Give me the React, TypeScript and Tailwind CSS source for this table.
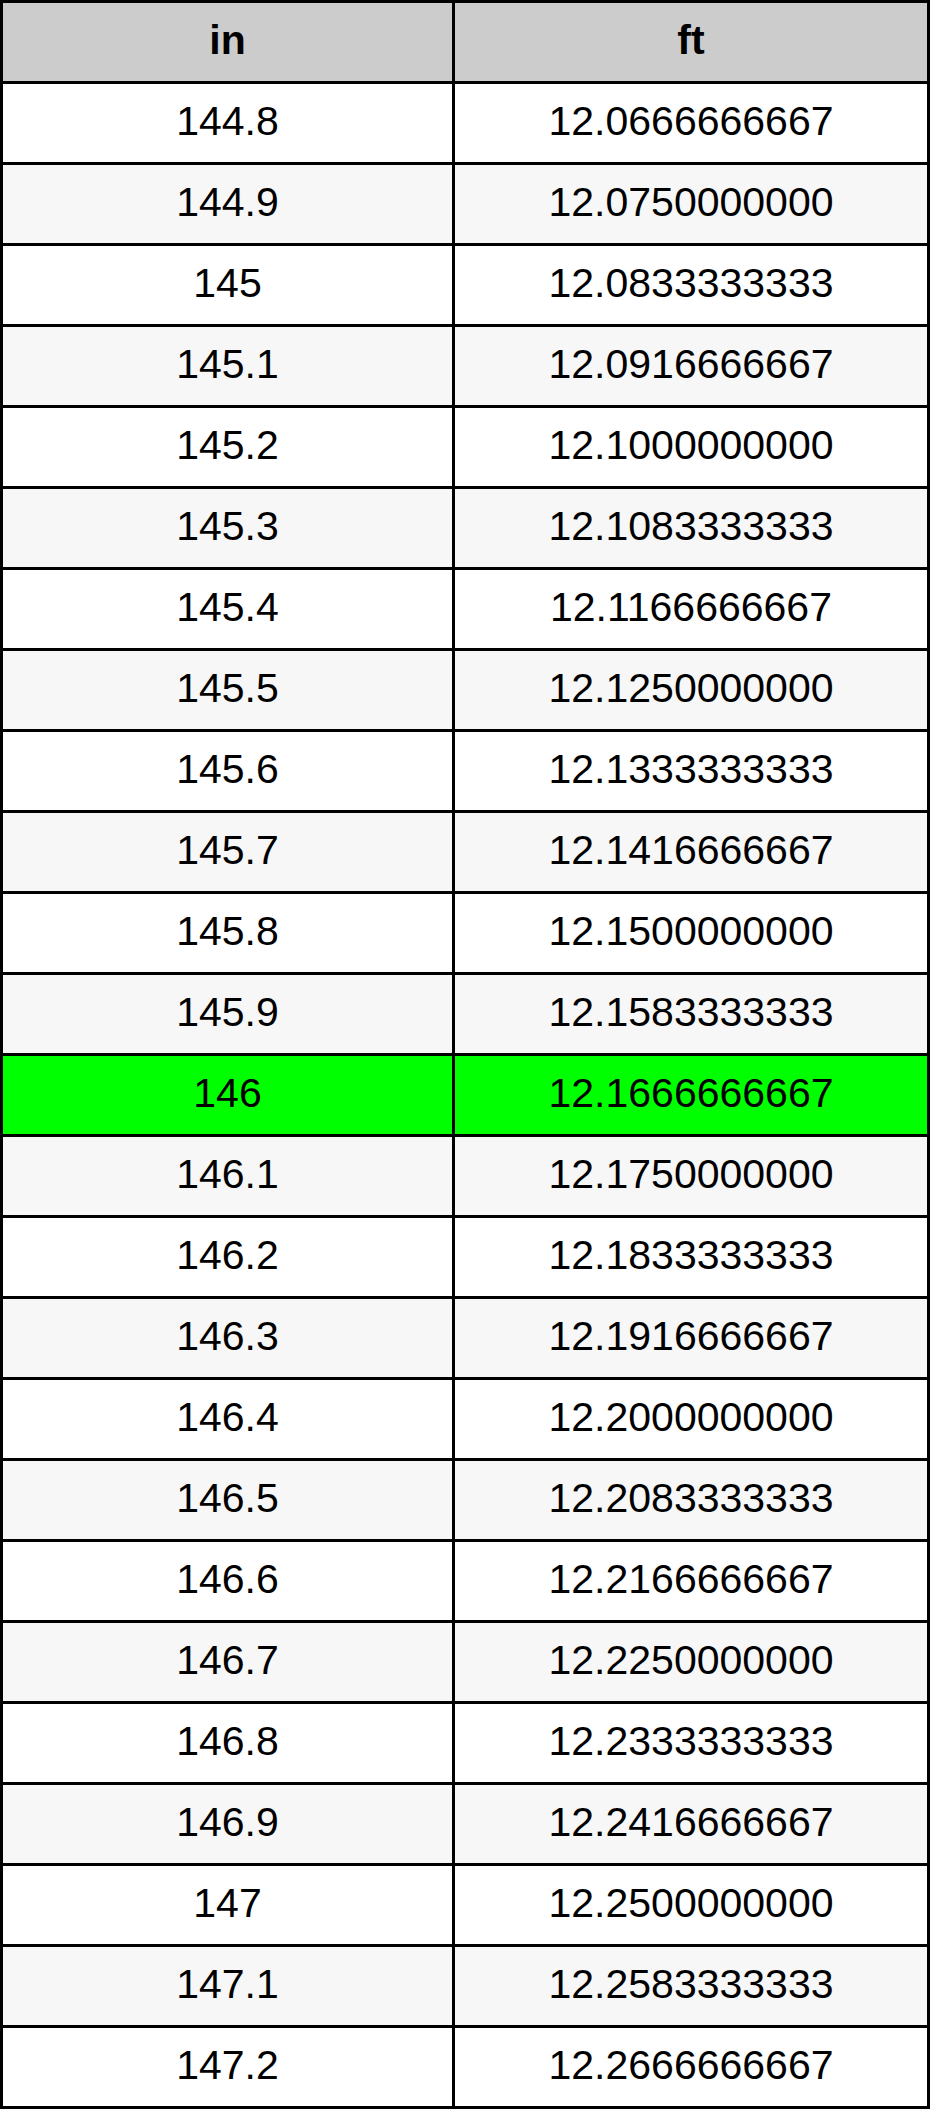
import React from "react";

const rows: [string, string][] = [
  ["144.8", "12.0666666667"],
  ["144.9", "12.0750000000"],
  ["145", "12.0833333333"],
  ["145.1", "12.0916666667"],
  ["145.2", "12.1000000000"],
  ["145.3", "12.1083333333"],
  ["145.4", "12.1166666667"],
  ["145.5", "12.1250000000"],
  ["145.6", "12.1333333333"],
  ["145.7", "12.1416666667"],
  ["145.8", "12.1500000000"],
  ["145.9", "12.1583333333"],
  ["146", "12.1666666667"],
  ["146.1", "12.1750000000"],
  ["146.2", "12.1833333333"],
  ["146.3", "12.1916666667"],
  ["146.4", "12.2000000000"],
  ["146.5", "12.2083333333"],
  ["146.6", "12.2166666667"],
  ["146.7", "12.2250000000"],
  ["146.8", "12.2333333333"],
  ["146.9", "12.2416666667"],
  ["147", "12.2500000000"],
  ["147.1", "12.2583333333"],
  ["147.2", "12.2666666667"],
];

export default function App() {
  return (
    <div className="w-[930px] bg-white text-black font-['Liberation_Sans',Arial,sans-serif] text-[41px]">
      <div className="border-t-[3px] border-x-[3px] border-black">
        {/* header */}
        <div className="flex h-[81px] border-b-[3px] border-black bg-[#cccccc] font-bold">
          <div className="w-[452px] border-r-[3px] border-black flex items-center justify-center pb-[3px]">in</div>
          <div className="flex-1 flex items-center justify-center pb-[3px]">ft</div>
        </div>
        {rows.map(([inch, ft], idx) => {
          const bg = inch === "146" ? "bg-[#00ff00]" : idx % 2 === 1 ? "bg-[#f7f7f7]" : "bg-white";
          return (
            <div key={inch} className={`flex h-[81px] border-b-[3px] border-black ${bg}`}>
              <div className="w-[452px] border-r-[3px] border-black flex items-center justify-center pb-[3px]">{inch}</div>
              <div className="flex-1 flex items-center justify-center pb-[3px]">{ft}</div>
            </div>
          );
        })}
      </div>
    </div>
  );
}
